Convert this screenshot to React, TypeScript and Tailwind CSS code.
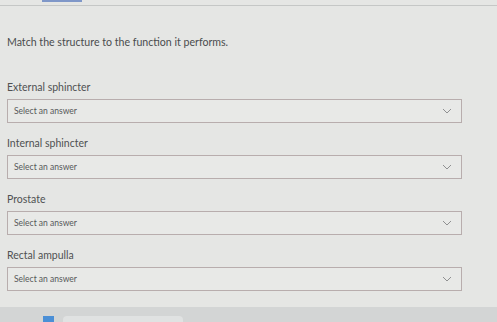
import React from 'react';

const items = ['External sphincter', 'Internal sphincter', 'Prostate', 'Rectal ampulla'];

const Chevron = () => (
  <svg width="10" height="6" viewBox="0 0 10 6" fill="none" className="text-[#8f9091]">
    <path d="M1 1l4 4 4-4" stroke="currentColor" strokeWidth="1" />
  </svg>
);

export default function App() {
  return (
    <div
      className="w-[497px] h-[322px] bg-[#e5e6e4] flex flex-col overflow-hidden"
      style={{ fontFamily: 'Lato, "Open Sans", sans-serif' }}
    >
      {/* top strip */}
      <div className="h-[5px] flex">
        <div className="ml-[42px] w-[40px] h-[2px] bg-[#7f97c8]" />
      </div>
      <div className="h-px bg-[#c5c7c6]" />

      <div className="flex-1 pl-[7px] pr-[35px]">
        <p className="mt-[29px] text-[10.6px] leading-[14px] text-[#4a4c4d]">
          Match the structure to the function it performs.
        </p>

        <div className="mt-[31px] flex flex-col gap-[13px]">
          {items.map((label) => (
            <div key={label} className="flex flex-col">
              <span className="text-[10.5px] leading-[15px] text-[#4f5152]">{label}</span>
              <div className="mt-[4px] h-[24px] border border-[#b8adad] bg-[#e8e9e7] flex items-center justify-between pl-[6px] pr-[9px]">
                <span className="text-[8.5px] text-[#565859]">Select an answer</span>
                <Chevron />
              </div>
            </div>
          ))}
        </div>
      </div>

      {/* taskbar */}
      <div className="h-[15px] bg-[#d3d5d5] flex items-end gap-[9px] pl-[43px]">
        <div className="w-[11px] h-[6px] bg-[#4b8fd6]" />
        <div className="w-[120px] h-[6px] rounded-t-[4px] bg-[#e0e2e2]" />
      </div>
    </div>
  );
}
